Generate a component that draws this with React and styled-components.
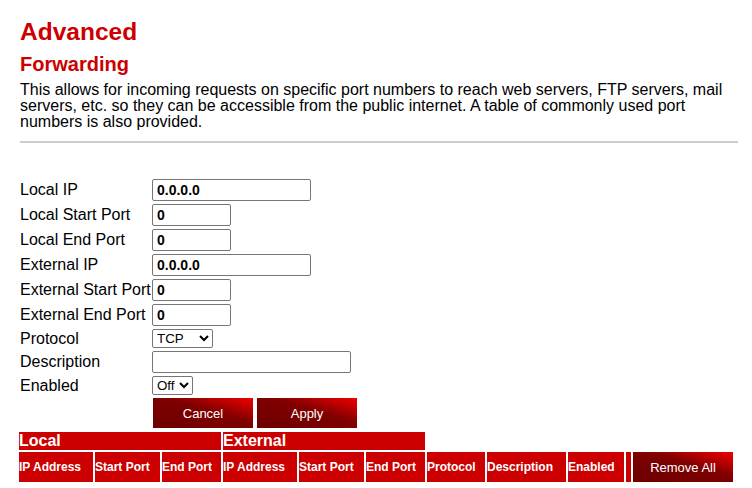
import React from "react";
import styled, { createGlobalStyle } from "styled-components";

const GlobalStyle = createGlobalStyle`
  html, body { margin: 0; padding: 0; background: #fff; }
  body { font-family: "Liberation Sans", Arial, sans-serif; color: #000; }
`;

const Page = styled.div`
  width: 718px;
  padding: 18px 0 0 20px;
`;

const Title = styled.h1`
  margin: 0;
  font-size: 24.5px;
  line-height: 28px;
  font-weight: bold;
  color: #cc0000;
`;

const Subtitle = styled.h2`
  margin: 7px 0 0;
  font-size: 20px;
  line-height: 23px;
  font-weight: bold;
  color: #cc0000;
`;

const Intro = styled.p`
  margin: 6px 0 0;
  font-size: 16px;
  line-height: 16px;
`;

const Rule = styled.hr`
  margin: 11px 0 0;
  height: 2px;
  border: none;
  background: #cccccc;
`;

const Form = styled.form`
  margin-top: 36px;
  display: grid;
  grid-template-columns: 130px auto;
  column-gap: 2px;
  row-gap: 3px;
  align-items: center;
`;

const FieldLabel = styled.label`
  font-size: 16px;
  line-height: 18px;
  white-space: nowrap;
`;

const TextInput = styled.input`
  box-sizing: border-box;
  width: ${(p) => p.$w}px;
  height: 22px;
  margin: 0;
  padding: 0 4px;
  border: 1px solid #767676;
  border-radius: 2px;
  font-family: "Liberation Sans", Arial, sans-serif;
  font-size: 14px;
  font-weight: bold;
  color: #000;
  background: #fff;
  outline: none;
`;

const Select = styled.select`
  box-sizing: border-box;
  width: ${(p) => p.$w}px;
  height: 19px;
  margin: 0;
  font-family: "Liberation Sans", Arial, sans-serif;
  font-size: 13.33px;
  color: #000;
  border: 1px solid #767676;
  border-radius: 2px;
  background: #fff;
`;

const ButtonRow = styled.div`
  grid-column: 2;
  display: flex;
  gap: 4px;
  margin-left: 1px;
`;

const ActionButton = styled.button`
  width: 100px;
  height: 30px;
  margin: 0;
  padding: 0;
  border: none;
  color: #fff;
  font-family: "Liberation Sans", Arial, sans-serif;
  font-size: 13px;
  background: linear-gradient(to top right, #6c0000 0%, #800000 58%, #f20000 100%);
  cursor: pointer;
`;

const HeaderGrid = styled.div`
  margin: 4px 0 0 -1px;
  display: grid;
  grid-template-columns: 74px 65px 59px 74px 65px 59px 58px 79px 56px 5px 100px;
  grid-template-rows: 18px 30px;
  gap: 2px;
`;

const GroupHead = styled.div`
  grid-column: span 3;
  background: #cc0000;
  color: #fff;
  font-size: 16px;
  line-height: 18px;
  font-weight: bold;
`;

const ColHead = styled.div`
  grid-row: 2;
  display: flex;
  align-items: center;
  background: #cc0000;
  color: #fff;
  font-size: 12px;
  font-weight: bold;
  white-space: nowrap;
`;

const RemoveCell = styled(ActionButton)`
  grid-row: 2;
`;

const fields = [
  { label: "Local IP", value: "0.0.0.0", w: 159 },
  { label: "Local Start Port", value: "0", w: 79 },
  { label: "Local End Port", value: "0", w: 79 },
  { label: "External IP", value: "0.0.0.0", w: 159 },
  { label: "External Start Port", value: "0", w: 79 },
  { label: "External End Port", value: "0", w: 79 },
];

const columns = [
  "IP Address",
  "Start Port",
  "End Port",
  "IP Address",
  "Start Port",
  "End Port",
  "Protocol",
  "Description",
  "Enabled",
  "",
];

export default function App() {
  return (
    <>
      <GlobalStyle />
      <Page>
        <Title>Advanced</Title>
        <Subtitle>Forwarding</Subtitle>
        <Intro>
          This allows for incoming requests on specific port numbers to reach web
          servers, FTP servers, mail servers, etc. so they can be accessible from
          the public internet. A table of commonly used port numbers is also
          provided.
        </Intro>
        <Rule />
        <Form onSubmit={(e) => e.preventDefault()}>
          {fields.map((f) => (
            <React.Fragment key={f.label}>
              <FieldLabel>{f.label}</FieldLabel>
              <div>
                <TextInput $w={f.w} defaultValue={f.value} />
              </div>
            </React.Fragment>
          ))}
          <FieldLabel>Protocol</FieldLabel>
          <div>
            <Select $w={61} defaultValue="TCP">
              <option>TCP</option>
              <option>UDP</option>
              <option>Both</option>
            </Select>
          </div>
          <FieldLabel>Description</FieldLabel>
          <div>
            <TextInput $w={199} defaultValue="" />
          </div>
          <FieldLabel>Enabled</FieldLabel>
          <div>
            <Select $w={41} defaultValue="Off">
              <option>Off</option>
              <option>On</option>
            </Select>
          </div>
          <ButtonRow>
            <ActionButton type="button">Cancel</ActionButton>
            <ActionButton type="submit">Apply</ActionButton>
          </ButtonRow>
        </Form>
        <HeaderGrid>
          <GroupHead>Local</GroupHead>
          <GroupHead>External</GroupHead>
          {columns.map((c, i) => (
            <ColHead key={i}>{c}</ColHead>
          ))}
          <RemoveCell type="button">Remove All</RemoveCell>
        </HeaderGrid>
      </Page>
    </>
  );
}
